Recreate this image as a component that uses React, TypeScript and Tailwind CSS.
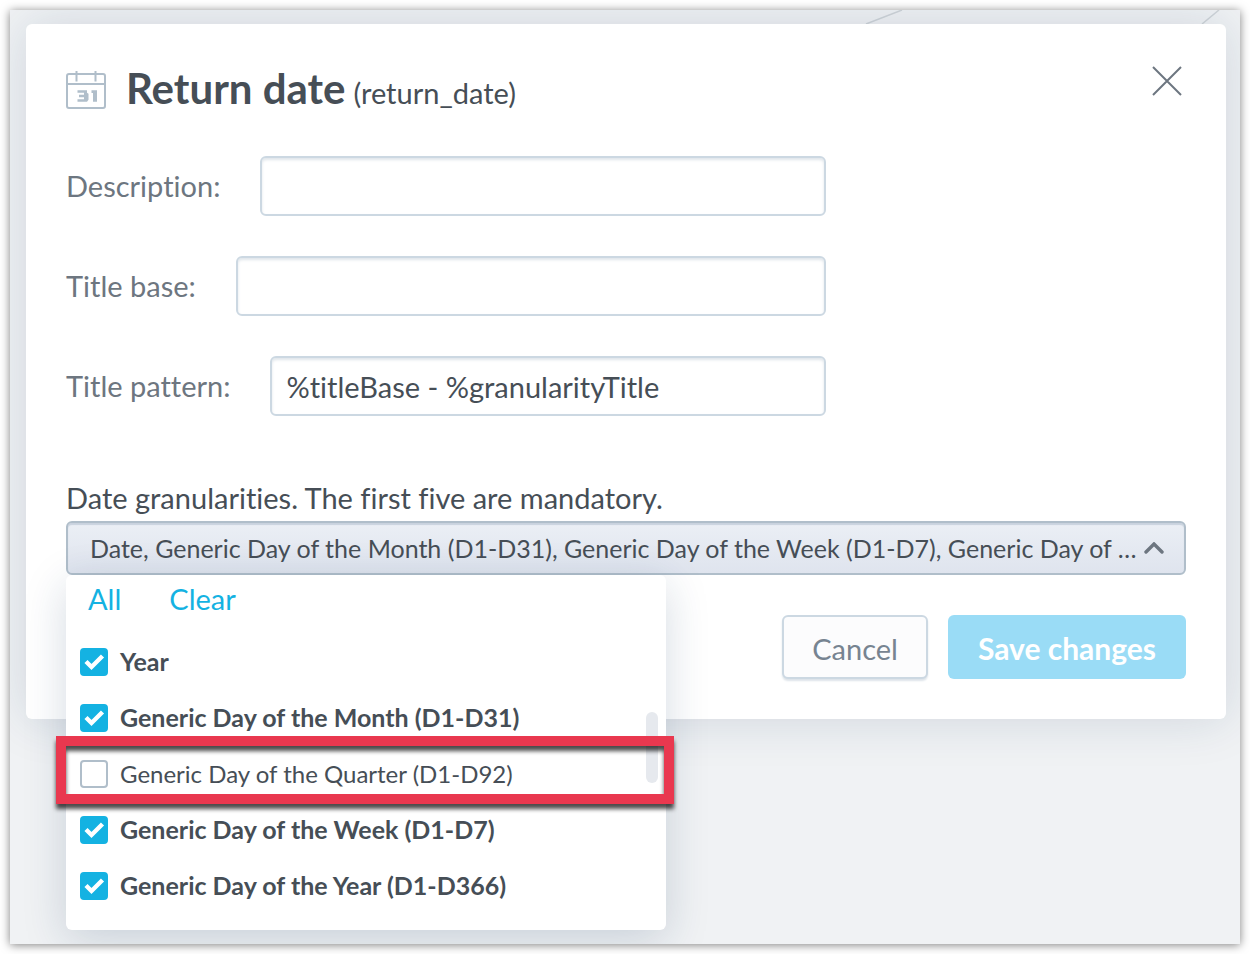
import React, { useState } from 'react';

interface Granularity {
  id: string;
  title: string;
  highlighted?: boolean;
}

interface FieldProps {
  id: string;
  label: string;
  value: string;
  onChange: (value: string) => void;
}

const granularities: Granularity[] = [
  { id: 'year', title: 'Year' },
  { id: 'day-of-month', title: 'Generic Day of the Month (D1-D31)' },
  { id: 'day-of-quarter', title: 'Generic Day of the Quarter (D1-D92)', highlighted: true },
  { id: 'day-of-week', title: 'Generic Day of the Week (D1-D7)' },
  { id: 'day-of-year', title: 'Generic Day of the Year (D1-D366)' },
];

const CalendarIcon = () => (
  <svg className="h-10 w-10 shrink-0" viewBox="0 0 40 40" fill="none" aria-hidden="true">
    <rect x="1" y="4" width="38" height="34" rx="2" stroke="#b0beca" strokeWidth="2" />
    <path d="M1 14h38" stroke="#b0beca" strokeWidth="2" />
    <path d="M10.5 1v10.5M29.5 1v10.5" stroke="#b0beca" strokeWidth="2" />
    <path d="M11.5 20.2H21v2.6l1.5 1v6l-1.5 2h-9.5v-2.6H18v-2h-5v-2.4h5v-2h-6.5z" fill="#b0beca" />
    <path d="M25.5 20.2H31v11.6h-4V23h-1.5z" fill="#b0beca" />
  </svg>
);

const Field: React.FC<FieldProps> = ({ id, label, value, onChange }) => (
  <div className="flex items-center gap-10">
    <label htmlFor={id} className="shrink-0 text-[29px] leading-8 text-[#6d7680]">
      {label}
    </label>
    <input
      id={id}
      type="text"
      value={value}
      onChange={(e) => onChange(e.target.value)}
      className="h-15 min-w-0 flex-1 rounded-md border-2 border-[#ccd8e2] bg-white px-3.5 text-[29px] text-[#464e56] shadow-[inset_0_2px_3px_#dfe5ea] outline-none"
    />
  </div>
);

const App: React.FC = () => {
  const [description, setDescription] = useState('');
  const [titleBase, setTitleBase] = useState('');
  const [titlePattern, setTitlePattern] = useState('%titleBase - %granularityTitle');
  const [isOpen, setIsOpen] = useState(true);
  const [selected, setSelected] = useState<string[]>(['year', 'day-of-month', 'day-of-week', 'day-of-year']);

  const toggle = (id: string) => {
    setSelected((current) =>
      current.includes(id) ? current.filter((item) => item !== id) : [...current, id]
    );
  };

  return (
    <div className="flex min-h-screen bg-white p-2.5 font-['Lato','Open_Sans',sans-serif] text-[#464e56] [font-variant-ligatures:none]">
      <main className="relative flex-1 bg-[#f0f2f4] shadow-[0_1px_9px_rgba(0,0,0,0.5)]">
        <svg className="absolute top-0 right-0 h-3.5 w-96" viewBox="0 0 384 14" fill="none" aria-hidden="true">
          <path d="M10 14L46 0M346 14L363 0" stroke="#cfd4d8" strokeWidth="1.5" />
        </svg>

        <div className="absolute inset-0 overflow-hidden pt-3.5 pr-3.5 pl-4">
          <div role="dialog" aria-labelledby="dialog-title" className="relative rounded-md bg-white p-10 shadow-[0_0_50px_rgba(20,56,93,0.15)]">
            <header className="flex h-13 items-center gap-5">
              <CalendarIcon />
              <h1 id="dialog-title" className="flex items-baseline gap-2 text-[42px] leading-12 font-bold">
                Return date <span className="text-[29px] font-normal">(return_date)</span>
              </h1>
              <button type="button" aria-label="Close" className="ml-auto self-start px-1 py-0.5">
                <svg className="h-[30px] w-[30px]" viewBox="0 0 30 30" fill="none" stroke="#6d7680" strokeWidth="2">
                  <path d="M1 1l28 28M29 1L1 29" />
                </svg>
              </button>
            </header>

            <div className="mt-10 flex max-w-[760px] flex-col gap-10">
              <Field id="description" label="Description:" value={description} onChange={setDescription} />
              <Field id="title-base" label="Title base:" value={titleBase} onChange={setTitleBase} />
              <Field id="title-pattern" label="Title pattern:" value={titlePattern} onChange={setTitlePattern} />
            </div>

            <p className="mt-16 mb-[5px] text-[29px] leading-9">
              Date granularities. The first five are mandatory.
            </p>

            <div className="relative">
              <button
                type="button"
                aria-expanded={isOpen}
                onClick={() => setIsOpen(!isOpen)}
                className="flex h-[54px] w-full items-center justify-between rounded-md border-2 border-[#b0beca] bg-linear-to-b from-[#ebeff5] to-[#dfe4ee] pr-5 pl-5.5 text-left text-[25px] shadow-[inset_0_2px_1px_#c9d2de]"
              >
                <span className="truncate pt-0.5">
                  Date, Generic Day of the Month (D1-D31), Generic Day of the Week (D1-D7), Generic Day of …
                </span>
                <svg className="h-3 w-5 shrink-0" viewBox="0 0 20 12" fill="none" stroke="#6d7680" strokeWidth="3.4" strokeLinecap="round">
                  <path d="M2 10l8-8 8 8" />
                </svg>
              </button>

              {isOpen && (
                <div className="absolute top-full left-0 w-[600px] rounded-md bg-white pb-4 shadow-[0_10px_44px_rgba(20,56,93,0.18)]">
                  <div className="flex h-[59px] items-start gap-12 px-[22px] pt-1.5 text-[29px] leading-9 text-[#14b2e2]">
                    <button type="button" onClick={() => setSelected(granularities.map((item) => item.id))}>
                      All
                    </button>
                    <button type="button" onClick={() => setSelected([])}>
                      Clear
                    </button>
                  </div>
                  <div className="absolute top-[137px] right-2 h-[71px] w-3 rounded-full bg-[#e6e9ee]" />
                  {granularities.map((item) => (
                    <div key={item.id} className="relative">
                      <label className="flex h-14 items-center gap-3 px-3.5">
                        <span className="grid h-7 w-7 shrink-0 place-items-center">
                          <input
                            type="checkbox"
                            checked={selected.includes(item.id)}
                            onChange={() => toggle(item.id)}
                            className="peer col-start-1 row-start-1 h-7 w-7 appearance-none rounded-sm border-2 border-[#b0beca] bg-white checked:border-[#14b2e2] checked:bg-[#14b2e2]"
                          />
                          <svg
                            className="pointer-events-none invisible col-start-1 row-start-1 h-7 w-7 peer-checked:visible"
                            viewBox="0 0 28 28"
                            fill="none"
                            stroke="#fff"
                            strokeWidth="4.4"
                          >
                            <path d="M6 13.5l5.5 5.5L22.5 8" />
                          </svg>
                        </span>
                        <span className={selected.includes(item.id) ? 'text-[25px] font-bold' : 'text-[24px]'}>
                          {item.title}
                        </span>
                      </label>
                      {item.highlighted && (
                        <div className="pointer-events-none absolute -top-2.5 -right-2 -bottom-0.5 -left-2.5 z-10 border-10 border-[#e9384f] drop-shadow-[0_5px_2px_rgba(0,0,0,0.7)]" />
                      )}
                    </div>
                  ))}
                </div>
              )}
            </div>

            <footer className="mt-10 flex justify-end gap-5">
              <button type="button" className="h-16 rounded-md border-2 border-[#ccd8e2] bg-[#fcfcfd] px-7 pt-1 text-[29px] text-[#778491] shadow-[0_2px_2px_#dde3e9]">
                Cancel
              </button>
              <button type="button" className="h-16 rounded-md bg-[#9adcf6] px-7.5 pt-0.5 text-[30px] font-bold text-white">
                Save changes
              </button>
            </footer>
          </div>
        </div>
      </main>
    </div>
  );
};

export default App;
